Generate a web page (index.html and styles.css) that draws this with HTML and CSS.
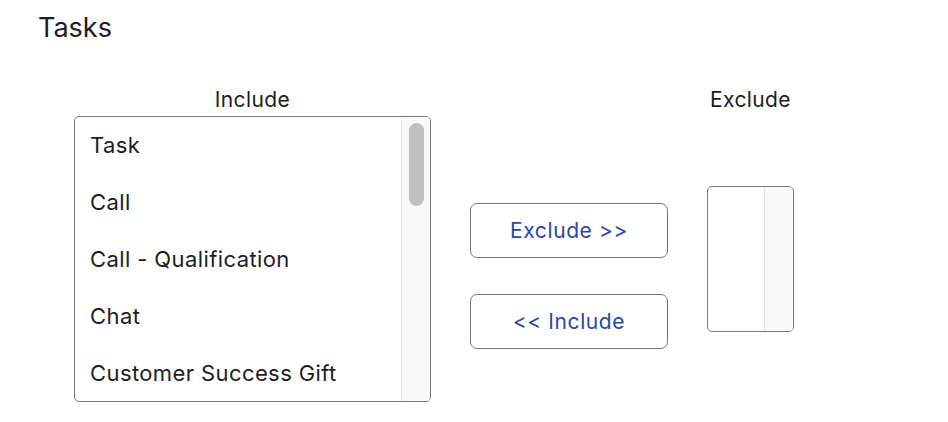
FILE: index.html
```html
<!DOCTYPE html>
<html lang="en">
<head>
    <meta charset="UTF-8">
    <title>Tasks</title>
    <link rel="stylesheet" href="styles.css">
</head>
<body>
    <h1 class="section-title">Tasks</h1>

    <div class="picker">
        <div class="picker-column include-column">
            <div class="picker-label">Include</div>
            <div class="list-box include-box">
                <ul class="list-items">
                    <li>Task</li>
                    <li>Call</li>
                    <li>Call - Qualification</li>
                    <li>Chat</li>
                    <li>Customer Success Gift</li>
                </ul>
                <div class="scroll-track">
                    <div class="scroll-thumb"></div>
                </div>
            </div>
        </div>

        <div class="picker-actions">
            <button class="move-button">Exclude &gt;&gt;</button>
            <button class="move-button">&lt;&lt; Include</button>
        </div>

        <div class="picker-column exclude-column">
            <div class="picker-label">Exclude</div>
            <div class="list-box exclude-box">
                <ul class="list-items"></ul>
                <div class="scroll-track"></div>
            </div>
        </div>
    </div>
</body>
</html>
```

FILE: styles.css
```css
body {
    margin: 0;
    padding: 12px 38px;
    background-color: #fff;
    color: #1d1d1f;
    font-family: 'Inter', 'Liberation Sans', sans-serif;
}

.section-title {
    margin: 0;
    font-size: 27px;
    font-weight: normal;
    line-height: 32px;
}

.picker {
    display: flex;
    align-items: flex-start;
    margin-top: 40px;
    margin-left: 36px;
}

.picker-column {
    display: flex;
    flex-direction: column;
    align-items: center;
}

.picker-label {
    font-size: 21px;
    letter-spacing: 0.4px;
    line-height: 24px;
    margin: 4px 0 4px;
}

.list-box {
    display: flex;
    box-sizing: border-box;
    border: 1px solid #7a7a7a;
    border-radius: 5px;
    background: #fff;
    overflow: hidden;
}

.include-box {
    width: 357px;
    height: 286px;
}

.exclude-box {
    width: 87px;
    height: 146px;
    margin-top: 70px;
}

.list-items {
    flex: 1;
    list-style: none;
    margin: 0;
    padding: 0;
}

.list-items li {
    padding-left: 15px;
    font-size: 22px;
    letter-spacing: 0.4px;
    line-height: 57px;
}

.scroll-track {
    width: 29px;
    box-sizing: border-box;
    border-left: 1px solid #e6e6e6;
    background: #f8f8f8;
    padding: 6px 6px 0 7px;
}

.scroll-thumb {
    height: 83px;
    border-radius: 8px;
    background: #c1c1c1;
}

.picker-actions {
    display: flex;
    flex-direction: column;
    margin: 119px 39px 0;
}

.move-button {
    width: 198px;
    height: 55px;
    margin-bottom: 36px;
    border: 1px solid #767676;
    border-radius: 7px;
    background: #fff;
    color: #2a48a6;
    font-family: inherit;
    font-size: 21px;
    letter-spacing: 0.6px;
    cursor: pointer;
}
```
